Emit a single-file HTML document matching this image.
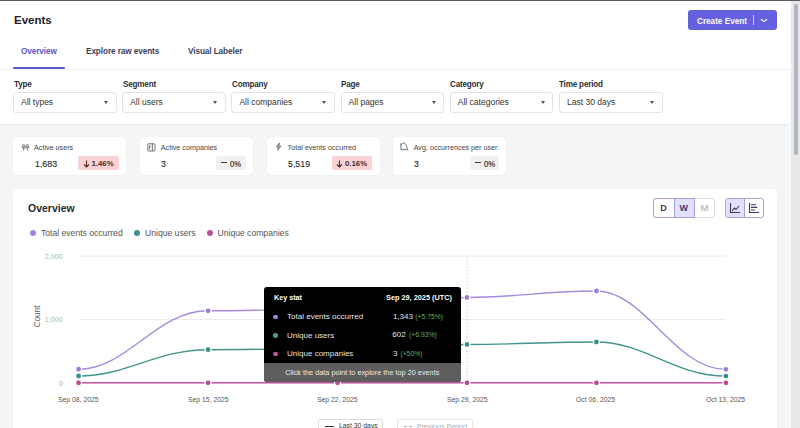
<!DOCTYPE html>
<html><head><meta charset="utf-8">
<style>
*{box-sizing:border-box;margin:0;padding:0}
html,body{width:800px;height:428px;overflow:hidden;background:#f5f5f5;font-family:"Liberation Sans",sans-serif;color:#2e2e33}
.a{position:absolute;white-space:nowrap;line-height:1}
#topline{left:0;top:0;width:800px;height:1px;background:#5b5b63}
#header{left:0;top:1px;width:791px;height:69px;background:#fff;border-bottom:1px solid #efeff1}
#filters{left:0;top:70px;width:791px;height:54.5px;background:#fff;border-bottom:1px solid #e6e6e6}
.title{font-size:11.5px;font-weight:bold;color:#222;transform:translateY(1px)}
.tab{font-size:9.6px;font-weight:bold;color:#3e4060;letter-spacing:-0.1px;transform:scaleX(0.855);transform-origin:0 0}
.btn{left:688px;top:10px;width:89px;height:20px;background:#6460e0;border-radius:3px}
.flabel{top:80px;font-size:9px;color:#2e2e33;font-weight:bold;letter-spacing:-0.2px;transform:scaleX(0.9);transform-origin:0 0}
.sel{top:92px;width:103.5px;height:20.5px;border:1px solid #e3e3e6;border-radius:3px;background:#fff}
.sel span{position:absolute;left:7px;top:5px;font-size:8.5px;color:#333;line-height:1}
.sel i{position:absolute;right:7.5px;top:7.8px;width:0;height:0;border-left:2.75px solid transparent;border-right:2.75px solid transparent;border-top:3px solid #555}
.card{top:136.5px;width:113px;height:38.5px;background:#fff;border-radius:4px;box-shadow:0 0 1.5px rgba(0,0,0,0.08)}
.clabel{top:144.2px;font-size:7.2px;color:#444}
.cnum{top:159.4px;font-size:9.6px;color:#222;-webkit-text-stroke:0.1px #222;transform:scaleX(0.92);transform-origin:0 0}
.badge{top:155.7px;height:14.6px;border-radius:2px}
.badge span{position:absolute;top:4.6px;font-size:7.8px;font-weight:bold;line-height:1}
.red{background:#f8d2d4}
.red span{color:#4d2b2e}
.gray{background:#f1f1f2}
.gray span{color:#333}
#ov{left:13px;top:189px;width:764px;height:260px;background:#fff;border-radius:4px;box-shadow:0 0 1.5px rgba(0,0,0,0.08)}
.ovt{left:28px;top:203px;font-size:10.5px;font-weight:bold;color:#2b2b2b}
.leg{top:229px;font-size:8.6px;color:#555}
.dot{width:6px;height:6px;border-radius:50%}
.ylab{font-size:7.2px;color:#b3b3b3}
.xlab{top:395.5px;font-size:7.6px;color:#555;transform:scaleX(0.9);transform-origin:0 0}
#scroll{left:791px;top:0;width:9px;height:428px;background:#e6e8ea}
#thumb{left:793.7px;top:3.5px;width:4px;height:151.5px;background:#b0b6bc;border-radius:2px}
.tt{font-size:8px;color:#e4e4e4}
.pct{font-size:6.8px;color:#5fb36a}
</style></head><body>
<div class="a" id="header"></div>
<div class="a" id="filters"></div>
<div class="a title" style="left:14px;top:14px">Events</div>
<div class="a tab" style="left:20.8px;top:45.6px;color:#5b56c9">Overview</div>
<div class="a tab" style="left:86px;top:45.6px">Explore raw events</div>
<div class="a tab" style="left:187.5px;top:45.6px">Visual Labeler</div>
<div class="a" style="left:13px;top:66.5px;width:52px;height:2px;background:#5d58c8;border-radius:1px"></div>
<div class="a btn"></div>
<div class="a" style="left:696.8px;top:16.5px;font-size:8.6px;color:#fff;font-weight:bold;transform:scaleX(0.95);transform-origin:0 0">Create Event</div>
<div class="a" style="left:753px;top:15px;width:1px;height:10px;background:#fff;opacity:.65"></div>
<svg class="a" style="left:759px;top:18px" width="10" height="6" viewBox="0 0 10 6"><path d="M2,1.2 L5,3.6 L8,1.2" fill="none" stroke="#fff" stroke-width="1.2"/></svg>

<div class="a flabel" style="left:13.5px">Type</div>
<div class="a flabel" style="left:122.5px">Segment</div>
<div class="a flabel" style="left:231.5px">Company</div>
<div class="a flabel" style="left:341px">Page</div>
<div class="a flabel" style="left:450px">Category</div>
<div class="a flabel" style="left:559px">Time period</div>
<div class="a sel" style="left:13px"><span>All types</span><i></i></div>
<div class="a sel" style="left:122.2px"><span>All users</span><i></i></div>
<div class="a sel" style="left:231.4px"><span>All companies</span><i></i></div>
<div class="a sel" style="left:340.6px"><span>All pages</span><i></i></div>
<div class="a sel" style="left:449.8px"><span>All categories</span><i></i></div>
<div class="a sel" style="left:559px"><span>Last 30 days</span><i></i></div>

<!-- stat cards -->
<div class="a card" style="left:13px"></div>
<div class="a card" style="left:139.5px"></div>
<div class="a card" style="left:266.5px"></div>
<div class="a card" style="left:393px"></div>

<svg class="a" style="left:20.5px;top:143.5px" width="9" height="7" viewBox="0 0 9 7"><g fill="none" stroke="#6a6a6a" stroke-width="0.9"><circle cx="2.6" cy="1.6" r="1.1"/><circle cx="6.4" cy="1.6" r="1.1"/><path d="M0.6,3.2 H8.4 M2.6,3.2 V6.4 M6.4,3.2 V6.4 M4.5,3.2 L3.8,4.6"/></g></svg>
<div class="a clabel" style="left:34px">Active users</div>
<div class="a cnum" style="left:34.5px">1,683</div>
<div class="a badge red" style="left:78px;width:41px"><svg style="position:absolute;left:4.5px;top:4.5px" width="7" height="8" viewBox="0 0 7 8"><path d="M3.5,0.5 V7 M1,4.5 L3.5,7 L6,4.5" fill="none" stroke="#4d2b2e" stroke-width="1.1"/></svg><span style="left:13.5px">1.46%</span></div>

<svg class="a" style="left:147px;top:142.5px" width="9" height="9" viewBox="0 0 9 9"><g fill="none" stroke="#6a6a6a" stroke-width="0.95"><rect x="0.8" y="0.8" width="7.2" height="7.2" rx="1"/><path d="M5.4,0.8 V8 M2.6,2.6 V6.4 M3.8,2.6 V3.6"/></g></svg>
<div class="a clabel" style="left:160.8px">Active companies</div>
<div class="a cnum" style="left:160.8px">3</div>
<div class="a badge gray" style="left:216px;width:30px"><i style="position:absolute;left:5px;top:6.8px;width:6.2px;height:1px;background:#3a3a3a"></i><span style="left:14px;top:4.1px;font-size:8.6px;font-weight:normal;-webkit-text-stroke:0.2px #333;transform:scaleX(0.9);transform-origin:0 0">0%</span></div>

<svg class="a" style="left:274.5px;top:142px" width="7" height="9" viewBox="0 0 7 9"><path d="M4.6,1 L1.3,5 H3.6 L2.6,8.2 L5.9,4.2 H3.6 Z" fill="none" stroke="#666" stroke-width="0.95" stroke-linejoin="round"/></svg>
<div class="a clabel" style="left:287.6px">Total events occurred</div>
<div class="a cnum" style="left:287.6px">5,519</div>
<div class="a badge red" style="left:331.5px;width:40.5px"><svg style="position:absolute;left:4.5px;top:4.5px" width="7" height="8" viewBox="0 0 7 8"><path d="M3.5,0.5 V7 M1,4.5 L3.5,7 L6,4.5" fill="none" stroke="#4d2b2e" stroke-width="1.1"/></svg><span style="left:13.5px">0.16%</span></div>

<svg class="a" style="left:400.3px;top:142.3px" width="9" height="9" viewBox="0 0 9 9"><path d="M1,7.6 V1.2 M1,3.2 C2,1.6 3,1 4,1 C5.8,1 6.6,4.5 7.9,7.6 H1" fill="none" stroke="#666" stroke-width="0.95" stroke-linejoin="round"/></svg>
<div class="a clabel" style="left:413.7px">Avg. occurrences per user</div>
<div class="a cnum" style="left:413.7px">3</div>
<div class="a badge gray" style="left:469.5px;width:29.5px"><i style="position:absolute;left:5px;top:6.8px;width:6.2px;height:1px;background:#3a3a3a"></i><span style="left:14px;top:4.1px;font-size:8.6px;font-weight:normal;-webkit-text-stroke:0.2px #333;transform:scaleX(0.9);transform-origin:0 0">0%</span></div>

<!-- overview -->
<div class="a" id="ov"></div>
<div class="a ovt">Overview</div>
<div class="a dot" style="left:30px;top:230.2px;background:#a384e0"></div>
<div class="a leg" style="left:41px">Total events occurred</div>
<div class="a dot" style="left:134px;top:230.2px;background:#3a918b"></div>
<div class="a leg" style="left:145px">Unique users</div>
<div class="a dot" style="left:207px;top:230.2px;background:#c04f9b"></div>
<div class="a leg" style="left:217.5px">Unique companies</div>

<div class="a" style="left:652.8px;top:198.2px;width:62.6px;height:19.4px;border:1px solid #dcdce0;border-radius:3px;background:#fff"></div>
<div class="a" style="left:652.8px;top:198.2px;width:42.4px;height:19.4px;border:1px solid #a7a2da;border-radius:3px 0 0 3px"></div>
<div class="a" style="left:673.8px;top:198.2px;width:21.4px;height:19.4px;background:#e2e0fa;border:1px solid #a7a2da"></div>
<div class="a" style="left:660.2px;top:204.4px;font-size:9px;font-weight:bold;color:#3b3a6b">D</div>
<div class="a" style="left:679.6px;top:204.4px;font-size:9px;font-weight:bold;color:#3b3a6b">W</div>
<div class="a" style="left:700.6px;top:203.2px;font-size:9.6px;color:#aaa">M</div>

<div class="a" style="left:725px;top:198.2px;width:39px;height:19.6px;border:1px solid #a7a2da;border-radius:3px;background:#fff;overflow:hidden"><div style="position:absolute;left:0;top:0;width:19.2px;height:19.6px;background:#e2e0fa;border-right:1px solid #a7a2da"></div></div>
<svg class="a" style="left:729px;top:202px" width="12" height="12" viewBox="0 0 12 12"><path d="M1.5,1 V10.5 H11" fill="none" stroke="#3b3a6b" stroke-width="1.1"/><path d="M3,9 L5.5,6 L7,7.5 L10,4" fill="none" stroke="#3b3a6b" stroke-width="1.1"/></svg>
<svg class="a" style="left:748px;top:202px" width="12" height="12" viewBox="0 0 12 12"><path d="M1.5,1 V10.5 H11" fill="none" stroke="#3b3a6b" stroke-width="1.1"/><path d="M3,2.8 H8 M3,5.4 H9.3 M3,8 H6.8" fill="none" stroke="#3b3a6b" stroke-width="1.1"/></svg>

<div class="a ylab" style="left:44.8px;top:252.5px">2,000</div>
<div class="a ylab" style="left:44.8px;top:316px">1,000</div>
<div class="a ylab" style="left:59px;top:379.5px">0</div>
<div class="a" style="left:26px;top:311.5px;font-size:8.2px;color:#555;transform:rotate(-90deg);transform-origin:center;width:24px;height:9px;text-align:center">Count</div>

<div class="a xlab" style="left:58.2px">Sep 08, 2025</div>
<div class="a xlab" style="left:187.7px">Sep 15, 2025</div>
<div class="a xlab" style="left:317.1px">Sep 22, 2025</div>
<div class="a xlab" style="left:446.6px">Sep 29, 2025</div>
<div class="a xlab" style="left:576.0px">Oct 06, 2025</div>
<div class="a xlab" style="left:705.5px">Oct 13, 2025</div>

<svg class="a" style="left:0;top:0" width="800" height="428" viewBox="0 0 800 428">
<g stroke="#ececec" stroke-width="1"><path d="M78.5,256 H726"/><path d="M78.5,319.5 H726"/><path d="M78.5,383 H726"/></g>
<path d="M467,256 V383" stroke="#cfcfd4" stroke-width="1" stroke-dasharray="1.5,2"/>
<path d="M78.60,369.20 C127.15,369.20 156.28,310.80 208.06,310.80 C256.61,310.80 285.74,309.00 337.52,309.00 C386.07,309.00 415.20,297.50 466.98,297.50 C515.53,297.50 544.66,291.00 596.44,291.00 C644.99,291.00 674.12,369.30 725.90,369.30" fill="none" stroke="#a58bde" stroke-width="1.4"/>
<path d="M78.60,376.00 C127.15,376.00 156.28,349.70 208.06,349.70 C256.61,349.70 285.74,348.50 337.52,348.50 C386.07,348.50 415.20,344.50 466.98,344.50 C515.53,344.50 544.66,342.00 596.44,342.00 C644.99,342.00 674.12,376.10 725.90,376.10" fill="none" stroke="#41938d" stroke-width="1.4"/>
<path d="M78.60,382.80 C127.15,382.80 156.28,382.80 208.06,382.80 C256.61,382.80 285.74,382.80 337.52,382.80 C386.07,382.80 415.20,382.80 466.98,382.80 C515.53,382.80 544.66,382.80 596.44,382.80 C644.99,382.80 674.12,382.80 725.90,382.80" fill="none" stroke="#c2539c" stroke-width="1.5"/>
<circle cx="78.6" cy="369.2" r="3" fill="#9a7ddc" stroke="#fff" stroke-width="1.2"/><circle cx="78.6" cy="376.0" r="3" fill="#37908a" stroke="#fff" stroke-width="1.2"/><circle cx="78.6" cy="382.8" r="3" fill="#b9488f" stroke="#fff" stroke-width="1.2"/><circle cx="208.06" cy="310.8" r="3" fill="#9a7ddc" stroke="#fff" stroke-width="1.2"/><circle cx="208.06" cy="349.7" r="3" fill="#37908a" stroke="#fff" stroke-width="1.2"/><circle cx="208.06" cy="382.8" r="3" fill="#b9488f" stroke="#fff" stroke-width="1.2"/><circle cx="337.52" cy="309.0" r="3" fill="#9a7ddc" stroke="#fff" stroke-width="1.2"/><circle cx="337.52" cy="348.5" r="3" fill="#37908a" stroke="#fff" stroke-width="1.2"/><circle cx="337.52" cy="382.8" r="3" fill="#b9488f" stroke="#fff" stroke-width="1.2"/><circle cx="466.98" cy="297.5" r="3" fill="#9a7ddc" stroke="#fff" stroke-width="1.2"/><circle cx="466.98" cy="344.5" r="3" fill="#37908a" stroke="#fff" stroke-width="1.2"/><circle cx="466.98" cy="382.8" r="3" fill="#b9488f" stroke="#fff" stroke-width="1.2"/><circle cx="596.44" cy="291.0" r="3" fill="#9a7ddc" stroke="#fff" stroke-width="1.2"/><circle cx="596.44" cy="342.0" r="3" fill="#37908a" stroke="#fff" stroke-width="1.2"/><circle cx="596.44" cy="382.8" r="3" fill="#b9488f" stroke="#fff" stroke-width="1.2"/><circle cx="725.9000000000001" cy="369.3" r="3" fill="#9a7ddc" stroke="#fff" stroke-width="1.2"/><circle cx="725.9000000000001" cy="376.1" r="3" fill="#37908a" stroke="#fff" stroke-width="1.2"/><circle cx="725.9000000000001" cy="382.8" r="3" fill="#b9488f" stroke="#fff" stroke-width="1.2"/>
</svg>

<!-- tooltip -->
<div class="a" style="left:264px;top:287px;width:197px;height:94.5px;background:#000;border-radius:3px;overflow:hidden">
<div style="position:absolute;left:0;top:76.3px;width:197px;height:19px;background:#5e5e5e"></div>
</div>
<div class="a tt" style="left:273.7px;top:293.5px;font-weight:bold;color:#fff;transform:scaleX(0.9);transform-origin:0 0">Key stat</div>
<div class="a tt" style="left:385.7px;top:293.5px;font-weight:bold;color:#fff;transform:scaleX(0.915);transform-origin:0 0">Sep 29, 2025 (UTC)</div>
<div class="a dot" style="left:273.2px;top:314.8px;width:4.5px;height:4.5px;background:#a58ae6"></div>
<div class="a dot" style="left:273.2px;top:333.2px;width:4.5px;height:4.5px;background:#4a9c96"></div>
<div class="a dot" style="left:273.2px;top:351.7px;width:4.5px;height:4.5px;background:#c9579f"></div>
<div class="a tt" style="left:287.1px;top:313px">Total events occurred</div>
<div class="a tt" style="left:287.1px;top:331.5px">Unique users</div>
<div class="a tt" style="left:287.1px;top:350px">Unique companies</div>
<div class="a tt" style="left:392.9px;top:312.5px">1,343</div>
<div class="a pct" style="left:415.3px;top:313.5px">(+5.75%)</div>
<div class="a tt" style="left:392.3px;top:331px">602</div>
<div class="a pct" style="left:409px;top:332px">(+6.93%)</div>
<div class="a tt" style="left:393px;top:349.5px">3</div>
<div class="a pct" style="left:400.4px;top:350.5px">(+50%)</div>
<div class="a" style="left:285.2px;top:368.6px;font-size:7.3px;color:#e8e8e8">Click the data point to explore the top 20 events</div>

<!-- bottom legend -->
<div class="a" style="left:318px;top:419px;width:65px;height:14px;border:1px solid #ddd;border-radius:2px;background:#fff"></div>
<div class="a" style="left:324.5px;top:425.8px;width:9.5px;height:1.5px;background:#333"></div>
<div class="a" style="left:338.8px;top:422.3px;font-size:7.6px;color:#333;transform:scaleX(0.9);transform-origin:0 0">Last 30 days</div>
<div class="a" style="left:396.5px;top:419px;width:76.3px;height:14px;border:1px solid #e6e6e6;border-radius:2px;background:#fff"></div>
<div class="a" style="left:403.6px;top:426px;width:8.5px;height:1.2px;background:repeating-linear-gradient(90deg,#aaa 0 3px,transparent 3px 5.5px)"></div>
<div class="a" style="left:417px;top:422.5px;font-size:7.6px;color:#aaa;transform:scaleX(0.93);transform-origin:0 0">Previous Period</div>

<div class="a" style="left:787px;top:123px;width:4px;height:305px;background:#f7f8f9"></div>
<div class="a" id="scroll"></div>
<div class="a" id="thumb"></div>
<div class="a" id="topline"></div>
</body></html>
